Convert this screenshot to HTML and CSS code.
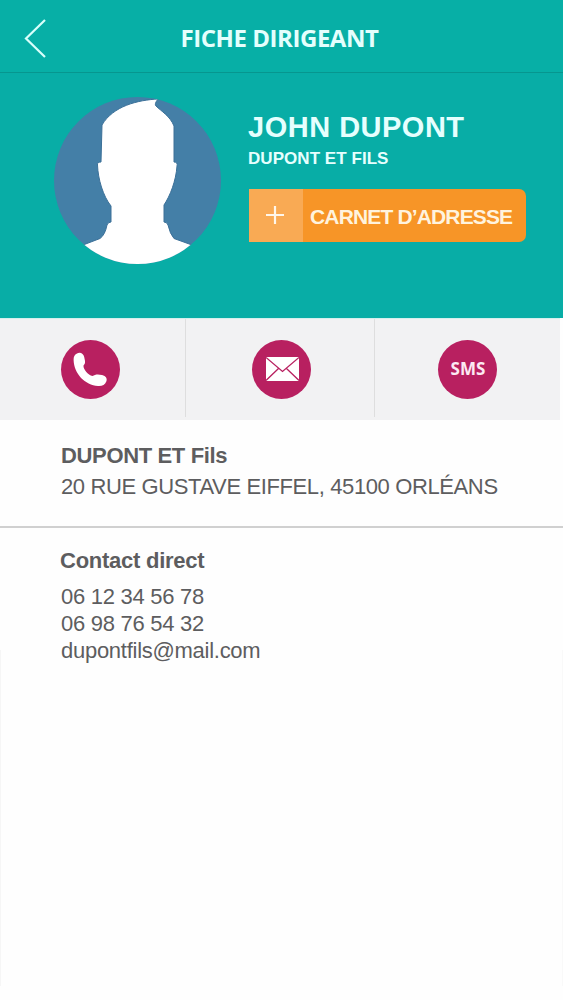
FILE: index.html
```html
<!DOCTYPE html>
<html lang="fr">
<head>
    <meta charset="UTF-8">
    <meta name="viewport" content="width=device-width, initial-scale=1.0">
    <title>Fiche dirigeant</title>
    <link rel="stylesheet" href="styles.css">
</head>
<body>
    <header class="topbar">
        <a href="#" class="back" aria-label="Retour">
            <svg width="22" height="40" viewBox="0 0 22 40">
                <path d="M21 1 L2 19.5 L21 38" fill="none" stroke="#d9fffb" stroke-width="2.2"/>
            </svg>
        </a>
        <h1>FICHE DIRIGEANT</h1>
    </header>

    <section class="profile">
        <svg class="avatar" width="167" height="167" viewBox="0 0 167 167">
            <defs>
                <clipPath id="disc"><circle cx="83.5" cy="83.5" r="83.5"/></clipPath>
            </defs>
            <g clip-path="url(#disc)">
                <rect width="167" height="167" fill="#447fa7"/>
                <path fill="#fff" stroke="#3c7098" stroke-width="1" d="M104 2 C84 3 59 9 48 28 L47 65 Q43 65 43.5 68 C44 82 49 99 57 109 L57 125 Q54 125 53 128 Q51 138 46 141.5 L29 148 L25 172 H143 L138 148 L120 141.5 Q116 137 114 128 Q113 125 110 125 L110 108 C116 99 122 84 123 69 Q124 65 120 65 L120 29 C116 19 107 14 102 9 Q100 7 104 2 Z"/>
            </g>
        </svg>
        <div class="identity">
            <h2>JOHN DUPONT</h2>
            <p class="company">DUPONT ET FILS</p>
            <a href="#" class="add-contact">
                <span class="plus">
                    <svg width="18" height="18" viewBox="0 0 18 18">
                        <path d="M9 0 V18 M0 9 H18" stroke="#fff6ea" stroke-width="2.2"/>
                    </svg>
                </span>
                <span class="add-label">CARNET D’ADRESSE</span>
            </a>
        </div>
    </section>

    <nav class="actions">
        <a href="#" class="action call" aria-label="Appeler">
            <span class="disc">
                <svg width="59" height="59" viewBox="0 0 59 59">
                    <path fill="#fff" d="M16 13.500 C19 11.500 22.500 13.500 23.200 17 C24 21 25 23 22.500 25.500 C22 29 27 35 31.500 36 C34 34.300 37 34 41 35 C45 36 46.500 38.500 45.300 41.500 C44 45 41 46.300 37 46 C24 45 13 34 12.600 20 C12.500 17 13.500 14.500 16 13.500 Z"/>
                </svg>
            </span>
        </a>
        <a href="#" class="action mail" aria-label="Envoyer un mail">
            <span class="disc">
                <svg width="33" height="24" viewBox="0 0 33 24">
                    <rect width="33" height="24" fill="#fff"/>
                    <path d="M0 0.5 L16.5 14.5 L33 0.5 M0 23.5 L12.5 11.5 M33 23.5 L20.5 11.5" fill="none" stroke="#b82060" stroke-width="1.3"/>
                </svg>
            </span>
        </a>
        <a href="#" class="action sms">
            <span class="disc">SMS</span>
        </a>
    </nav>

    <section class="block address">
        <h3>DUPONT ET Fils</h3>
        <p>20 RUE GUSTAVE EIFFEL, 45100 ORLÉANS</p>
    </section>

    <section class="block contact">
        <h3>Contact direct</h3>
        <p>06 12 34 56 78</p>
        <p>06 98 76 54 32</p>
        <p class="email">dupontfils@mail.com</p>
    </section>
</body>
</html>
```
FILE: styles.css
```css
* {
    box-sizing: border-box;
}
body {
    margin: 0;
    min-height: 1000px;
    background-color: #fefefe;
    font-family: "Liberation Sans", Arial, sans-serif;
    color: #5d5d5f;
}
h1, h2, h3, p {
    margin: 0;
    white-space: nowrap;
}
a {
    color: inherit;
    text-decoration: none;
}

/* Header */
.topbar {
    display: grid;
    grid-template-columns: 24px 1fr 27px;
    align-items: center;
    height: 73px;
    background-color: #07afa6;
    border-bottom: 1px solid #06968f;
}
.back {
    grid-column: 2;
    grid-row: 1;
    justify-self: start;
    height: 40px;
    margin-top: 5px;
}
.topbar h1 {
    grid-column: 1 / -1;
    grid-row: 1;
    justify-self: center;
    margin-top: 3px;
    margin-left: -4px;
    font-family: "Open Sans", sans-serif;
    font-size: 24px;
    font-weight: 700;
    line-height: 34px;
    letter-spacing: -0.45px;
    color: #e4fffd;
}

/* Profile */
.profile {
    display: flex;
    align-items: flex-start;
    gap: 27px;
    height: 245px;
    padding: 24px 0 0 54px;
    background-color: #08ada6;
}
.identity {
    padding-top: 14px;
    color: #e6fffe;
}
.identity h2 {
    font-size: 29px;
    line-height: 32px;
    letter-spacing: 0.5px;
}
.company {
    margin-top: 6px;
    font-size: 17px;
    font-weight: bold;
    line-height: 20px;
    letter-spacing: 0.05px;
}
.add-contact {
    display: flex;
    width: 277px;
    height: 53px;
    margin: 20px 0 0 1px;
    border-radius: 0 7px 7px 0;
    background-color: #f79527;
    overflow: hidden;
}
.plus {
    display: flex;
    align-items: center;
    justify-content: center;
    width: 54px;
    padding: 0 3px 2px 0;
    background-color: #f9aa54;
}
.add-label {
    padding-left: 7px;
    font-size: 21px;
    font-weight: bold;
    line-height: 55px;
    letter-spacing: -0.85px;
    white-space: nowrap;
    color: #fff3de;
}

/* Actions */
.actions {
    display: grid;
    grid-template-columns: 186px 189px 185px;
    width: 560px;
    height: 102px;
    background-color: #f2f2f3;
    border-top: 1px solid #d5efed;
}
.action {
    height: 98px;
    padding-top: 21px;
    border-right: 1px solid #dedede;
}
.action:last-child {
    border-right: none;
}
.disc {
    display: flex;
    align-items: center;
    justify-content: center;
    width: 59px;
    height: 59px;
    border-radius: 50%;
    background-color: #b82060;
}
.call .disc {
    margin-left: 61px;
}
.mail .disc {
    margin-left: 66px;
    padding: 0 0 2px 2px;
}
.sms .disc {
    margin-left: 63px;
    padding: 0 0 2px 1px;
    font-family: "Open Sans", sans-serif;
    font-size: 17px;
    font-weight: 700;
    color: #fce9f2;
}

/* Details */
.block {
    padding-left: 61px;
    font-size: 22px;
    line-height: 27px;
    letter-spacing: -0.27px;
}
.block h3 {
    font-size: 22px;
    letter-spacing: -0.35px;
}
.address {
    height: 108px;
    padding-top: 22px;
    border-bottom: 2px solid #d0d0d0;
}
.address p {
    margin-top: 4px;
    letter-spacing: -0.38px;
}
/* faint edges on both sides of the lower part */
.contact {
    height: 458px;
    padding-top: 19px;
    background: linear-gradient(#f6f6f6, #f6f6f6) left 122px / 1px 100% no-repeat,
                linear-gradient(#f9f9f9, #f9f9f9) right 122px / 1px 100% no-repeat;
}
.contact h3 {
    margin: 0 0 9px -1px;
    letter-spacing: -0.25px;
}
```
